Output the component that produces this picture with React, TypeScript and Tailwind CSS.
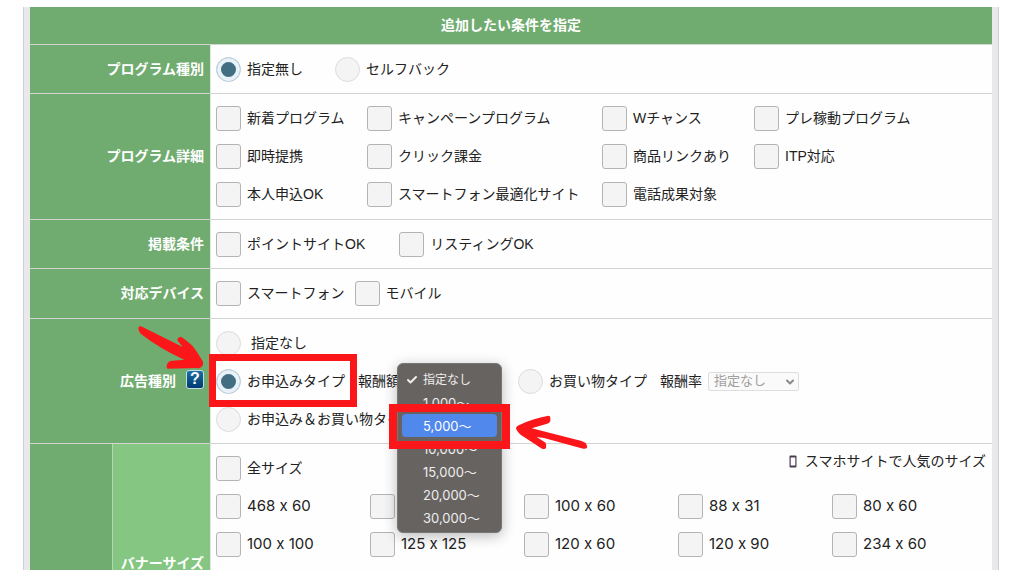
import { type ReactNode } from "react";
import { Check, ChevronDown } from "lucide-react";

interface OptionProps {
  label: string;
  type?: "checkbox" | "radio";
  name?: string;
  defaultChecked?: boolean;
  numeric?: boolean;
  highlighted?: boolean;
  spacing?: string;
}

const detailOptions = [
  "新着プログラム",
  "キャンペーンプログラム",
  "Wチャンス",
  "プレ稼動プログラム",
  "即時提携",
  "クリック課金",
  "商品リンクあり",
  "ITP対応",
  "本人申込OK",
  "スマートフォン最適化サイト",
  "電話成果対象"
];

const bannerSizes = [
  "468 x 60",
  "",
  "100 x 60",
  "88 x 31",
  "80 x 60",
  "100 x 100",
  "125 x 125",
  "120 x 60",
  "120 x 90",
  "234 x 60"
];

const rewardOptions = ["指定なし", "1,000〜", "5,000〜", "10,000〜", "15,000〜", "20,000〜", "30,000〜"];

const Option = ({
  label,
  type = "checkbox",
  name,
  defaultChecked,
  numeric,
  highlighted,
  spacing = "gap-1.5"
}: OptionProps) => (
  <label className={`relative flex h-[38px] shrink-0 items-center whitespace-nowrap ${spacing}`}>
    <input
      type={type}
      name={name}
      defaultChecked={defaultChecked}
      aria-label={label || "その他のサイズ"}
      className={
        type === "radio"
          ? "size-[25px] shrink-0 appearance-none rounded-full border border-[#dcdcdc] bg-[#f4f4f4] checked:border-[#cddde6] checked:bg-[#426d82] checked:shadow-[inset_0_0_0_4px_#e9f2f8]"
          : "size-[25px] shrink-0 appearance-none rounded-[3px] border border-[#b4b4b4] bg-[#f4f4f4] checked:bg-[#426d82]"
      }
    />
    <span
      className={
        numeric ? "font-['Inter',sans-serif] text-[15px] [font-feature-settings:'calt'_0]" : "pb-px"
      }
    >
      {label}
    </span>
    {highlighted ? (
      <span className="pointer-events-none absolute -top-[8px] -right-[12px] -bottom-[7px] -left-[7px] z-10 border-[7px] border-[#fb1719]" />
    ) : null}
  </label>
);

interface ConditionRowProps {
  label: string;
  padding?: string;
  help?: ReactNode;
  children: ReactNode;
}

const ConditionRow = ({ label, padding = "py-[5px]", help, children }: ConditionRowProps) => (
  <section aria-label={label} className="flex border-t border-[#d0d5d0]">
    <div className="flex w-[181px] shrink-0 items-center justify-end gap-2.5 border-r border-[#dfe8df] bg-[#70ac6f] pr-1.5 font-bold text-white">
      <h2 className="pb-px">{label}</h2>
      {help}
    </div>
    <div className={`min-w-0 flex-1 bg-[#fefefe] pr-1.5 pl-[5px] ${padding}`}>{children}</div>
  </section>
);

const HelpButton = () => (
  <div className="relative pb-1">
    <button
      type="button"
      aria-label="広告種別のヘルプ"
      className="flex h-[19px] w-[18px] items-center justify-center rounded-[3px] border border-[#c3dcea] bg-linear-to-b from-[#1d6fa5] to-[#003a6e] text-base font-bold text-white"
    >
      ?
    </button>
    <svg
      aria-hidden="true"
      viewBox="50 35 204 135"
      className="absolute -right-px bottom-full z-20 h-[45px] w-[68px]"
    >
      <path
        fill="#fb1719"
        d="M58 39Q62 37 68 42L187 101Q177 88 172 82Q170 73 180 70Q188 72 216 97Q226 108 248 145Q250 155 244 160Q238 166 224 164L142 166Q137 164 140 153Q144 143 156 142L192 139Q120 107 61 61Q54 52 54 43Z"
      />
    </svg>
  </div>
);

const RewardMenu = () => (
  <ul
    role="listbox"
    aria-label="報酬額の選択肢"
    className="absolute -top-[9px] -left-1 z-20 w-[105px] rounded-md border border-[#7a7674] bg-[#676361] pt-1 pb-[3px] font-['Inter','Noto_Sans_CJK_JP',sans-serif] text-[13px] text-[#eeeeee] shadow-[0_3px_14px_rgba(0,0,0,0.28)]"
  >
    {rewardOptions.map((option, index) => (
      <li
        key={option}
        role="option"
        aria-selected={index === 0}
        className={
          option === "5,000〜"
            ? "relative mx-1 flex h-[23px] items-center rounded-[4px] bg-[#5088ec] pl-[21px] text-white"
            : "relative mx-1 flex h-[23px] items-center pl-[21px]"
        }
      >
        {index === 0 ? <Check className="absolute left-1 size-3" strokeWidth={4} /> : null}
        <span className={index === 0 ? "text-xs" : undefined}>{option}</span>
        {option === "5,000〜" ? (
          <>
            <span className="absolute -inset-x-[13px] -top-[10px] -bottom-[12px] z-10 border-8 border-[#fb1719]" />
            <svg
              aria-hidden="true"
              viewBox="435 195 219 108"
              className="absolute top-0 left-full ml-[18px] h-9 w-[73px]"
            >
              <path
                fill="#fb1719"
                d="M438 239Q438 232 448 228Q490 208 532 201Q541 199 541 207V216Q539 223 529 225L485 238L620 272Q642 277 648 283L652 294Q650 301 640 299L612 292L522 267L500 264L527 281Q530 289 528 297Q525 302 516 299L461 263Q445 254 438 239Z"
              />
            </svg>
          </>
        ) : null}
      </li>
    ))}
  </ul>
);

export default function App() {
  return (
    <main className="min-h-screen bg-white pt-[7px] font-['Liberation_Sans','Noto_Sans_CJK_JP',sans-serif] text-sm leading-5 text-[#222222]">
      <form className="mr-[25px] ml-[23px] border-x border-[#cfcfd1] bg-[#e9e9eb] px-1.5">
        <h1 className="bg-[#70ac6f] pt-2 pb-[9px] text-center font-bold text-white">追加したい条件を指定</h1>

        <ConditionRow label="プログラム種別">
          <div className="flex gap-8">
            <Option type="radio" name="program" label="指定無し" defaultChecked />
            <Option type="radio" name="program" label="セルフバック" />
          </div>
        </ConditionRow>

        <ConditionRow label="プログラム詳細" padding="pt-[5px] pb-1.5">
          <div className="grid grid-cols-[151px_235px_152px_auto]">
            {detailOptions.map((option) => (
              <Option key={option} label={option} />
            ))}
          </div>
        </ConditionRow>

        <ConditionRow label="掲載条件">
          <div className="flex gap-[34px]">
            <Option label="ポイントサイトOK" />
            <Option label="リスティングOK" />
          </div>
        </ConditionRow>

        <ConditionRow label="対応デバイス" padding="pt-[5px] pb-1.5">
          <div className="flex gap-2.5">
            <Option label="スマートフォン" />
            <Option label="モバイル" />
          </div>
        </ConditionRow>

        <ConditionRow label="広告種別" help={<HelpButton />}>
          <Option type="radio" name="ad" label="指定なし" spacing="gap-2.5" />
          <div className="flex items-center">
            <Option type="radio" name="ad" label="お申込みタイプ" defaultChecked highlighted />
            <label htmlFor="reward" className="ml-[13px] shrink-0 pb-px">
              報酬額
            </label>
            <div className="relative mr-[21px] ml-px">
              <select
                id="reward"
                className="block h-[18px] w-24 appearance-none border border-[#d5d5d5] bg-white pl-1 text-[13px] leading-4"
              >
                {rewardOptions.map((option) => (
                  <option key={option}>{option}</option>
                ))}
              </select>
              <RewardMenu />
            </div>
            <Option type="radio" name="ad" label="お買い物タイプ" />
            <label htmlFor="rate" className="ml-[13px] shrink-0 pb-px">
              報酬率
            </label>
            <div className="relative ml-1.5">
              <select
                id="rate"
                disabled
                className="block h-[19px] w-[91px] appearance-none rounded-[2px] border border-[#dedede] bg-[#fafafa] pl-[5px] text-[13px] leading-4 text-[#a0a0a0]"
              >
                <option>指定なし</option>
              </select>
              <ChevronDown
                className="pointer-events-none absolute top-1 right-[3px] size-3 text-[#8a8a8a]"
                strokeWidth={4}
              />
            </div>
          </div>
          <Option type="radio" name="ad" label="お申込み＆お買い物タイプ" />
        </ConditionRow>

        <section aria-label="バナーサイズ" className="flex border-t border-[#d0d5d0]">
          <div className="w-[83px] shrink-0 border-r border-[#b5d8b4] bg-[#70ac6f]" />
          <div className="flex w-[98px] shrink-0 items-end justify-end border-r border-[#dfe8df] bg-[#84c682] pr-1.5 font-bold text-white">
            <h2 className="leading-[14px]">バナーサイズ</h2>
          </div>
          <div className="min-w-0 flex-1 bg-[#fefefe] pt-[5px] pr-1.5 pb-[7px] pl-[5px]">
            <div className="flex items-start justify-between">
              <Option label="全サイズ" />
              <p className="flex items-center gap-2 pt-0.5">
                <svg aria-hidden="true" viewBox="0 0 8 13" className="h-[13px] w-2">
                  <rect x="0.5" y="0.5" width="7" height="12" rx="1" fill="#4b3d50" />
                  <rect x="1.7" y="2.5" width="4.6" height="8" fill="#ffffff" />
                </svg>
                スマホサイトで人気のサイズ
              </p>
            </div>
            <div className="grid grid-cols-5">
              {bannerSizes.map((size) => (
                <Option key={size} label={size} numeric />
              ))}
            </div>
          </div>
        </section>
      </form>
    </main>
  );
}
